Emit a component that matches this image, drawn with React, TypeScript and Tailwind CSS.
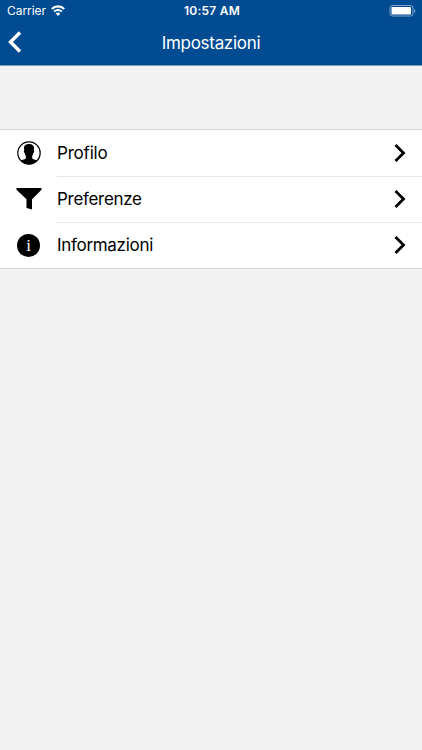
import type { ReactNode } from "react";

type SettingsItem = {
  id: string;
  label: string;
  labelClass: string;
  icon: ReactNode;
};

function ProfileIcon() {
  return (
    <svg width="24" height="24" viewBox="0 0 24 24" aria-hidden="true">
      <circle cx="12" cy="12" r="11.2" fill="#fff" stroke="#000" strokeWidth="1.2" />
      <path
        d="M12 2.9c-3.6 0-5.2 1.6-5 4.4l.2 2.2c-.5.2-.4.9-.2 1.5.2.7.4 1.1.8 1.2.2 1.2.5 2 1 2.8v2.2c-.4 1-3.4 1.3-5.3 2.6A11.2 11.2 0 0 0 12 23.2a11.2 11.2 0 0 0 8.5-3.4c-1.9-1.3-4.9-1.6-5.3-2.6V15c.5-.8.8-1.6 1-2.8.4-.1.6-.5.8-1.2.2-.6.3-1.3-.2-1.5l.2-2.2c.2-2.8-1.4-4.4-5-4.4z"
        fill="#000"
      />
    </svg>
  );
}

function FilterIcon() {
  return (
    <svg width="26" height="22" viewBox="0 0 26 22" aria-hidden="true">
      <path d="M.5 0h25v1.8L16 11.2v10.4l-5.5-1.6v-8.8L.5 1.8z" fill="#000" />
    </svg>
  );
}

function InfoIcon() {
  return (
    <span className="flex size-[23px] items-center justify-center rounded-full bg-black font-['Liberation_Serif',serif] text-[17px] leading-none text-white">
      i
    </span>
  );
}

const ITEMS: SettingsItem[] = [
  { id: "profile", label: "Profilo", labelClass: "tracking-[-0.2px]", icon: <ProfileIcon /> },
  { id: "preferences", label: "Preferenze", labelClass: "tracking-[-0.3px]", icon: <FilterIcon /> },
  { id: "info", label: "Informazioni", labelClass: "tracking-[-0.3px]", icon: <InfoIcon /> },
];

function StatusBar() {
  return (
    <div className="grid h-[22px] grid-cols-3 items-center pr-1.5 pl-[7px] text-xs">
      <div className="flex items-center gap-[5px]">
        <span className="tracking-[-0.05px]">Carrier</span>
        <svg className="mb-px" width="14" height="11" viewBox="0 0 14 11" fill="none" stroke="#fff" aria-hidden="true">
          <path d="M.8 4a8.8 8.8 0 0 1 12.4 0" strokeWidth="2.2" />
          <path d="M3.1 6.6a5.5 5.5 0 0 1 7.8 0" strokeWidth="1.9" />
          <path d="M7 10.9 4.7 8.6a3.2 3.2 0 0 1 4.6 0z" fill="#fff" stroke="none" />
        </svg>
      </div>
      <span className="pl-px text-center font-semibold tracking-[0.25px] whitespace-nowrap">10:57 AM</span>
      <svg className="mb-px justify-self-end" width="27" height="12" viewBox="0 0 27 12" aria-hidden="true">
        <rect x="1" y=".5" width="23" height="10.5" rx="2.5" fill="none" stroke="#fff" strokeOpacity=".5" />
        <rect x="2.5" y="2" width="19.5" height="7.5" rx=".8" fill="#fff" />
        <path d="M25.2 4v4c1.6-.6 1.6-3.4 0-4z" fill="#fff" fillOpacity=".5" />
      </svg>
    </div>
  );
}

function NavBar() {
  return (
    <div className="grid h-[43px] grid-cols-[40px_1fr_40px] items-center">
      <button type="button" aria-label="Indietro" className="mb-1 pl-2">
        <svg width="14" height="22" viewBox="0 0 14 22" fill="none" aria-hidden="true">
          <path d="M12 1.5 2.5 11l9.5 9.5" stroke="#fff" strokeWidth="3.4" />
        </svg>
      </button>
      <h1 className="text-center text-[17px] tracking-[-0.3px]">Impostazioni</h1>
    </div>
  );
}

function SettingsRow({ item }: { item: SettingsItem }) {
  return (
    <li className="group flex h-[46px] items-center">
      <span className="flex w-[57px] justify-center">{item.icon}</span>
      <span className="flex h-full flex-1 items-center justify-between border-t border-[#e8e8ea] pr-4 group-first:border-transparent">
        <span className={`pt-px text-[17px] ${item.labelClass}`}>{item.label}</span>
        <svg className="mb-px" width="12" height="18" viewBox="0 0 12 18" fill="none" aria-hidden="true">
          <path d="m1.5 1 8 8-8 8" stroke="#000" strokeWidth="2.8" />
        </svg>
      </span>
    </li>
  );
}

export default function App() {
  return (
    <main className="h-[750px] w-[422px] overflow-hidden bg-[#f3f3f3] font-['Inter',sans-serif] text-black">
      <header className="h-[66px] border-b border-[#7e9fc0] bg-[#004b91] text-white">
        <StatusBar />
        <NavBar />
      </header>
      <ul className="mt-[63px] border-y border-[#d9d9db] bg-white">
        {ITEMS.map((item) => (
          <SettingsRow key={item.id} item={item} />
        ))}
      </ul>
    </main>
  );
}
